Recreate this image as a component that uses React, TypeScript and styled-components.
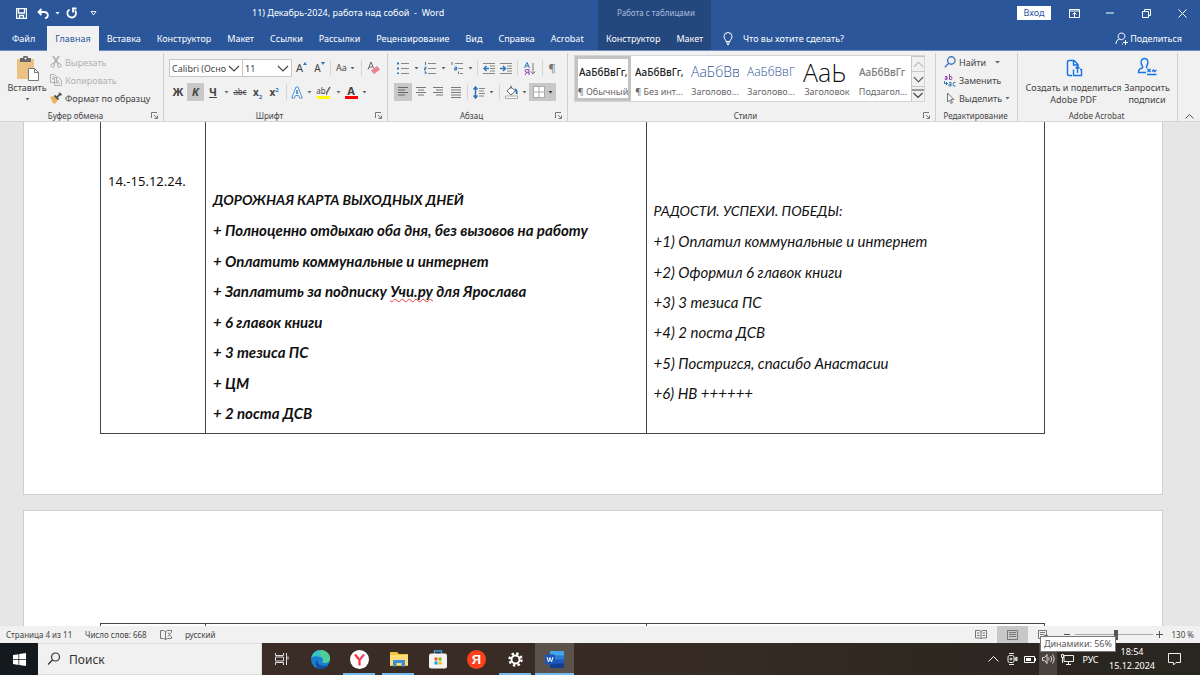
import React from "react";
import styled, { createGlobalStyle, css } from "styled-components";

const Global = createGlobalStyle`
  * { box-sizing: border-box; }
  body { margin: 0; font-family: "Noto Sans", "Open Sans", sans-serif; font-size: 9px; color: #444; }
  button, input, select { font: inherit; color: inherit; margin: 0; padding: 0; border: 0; background: none; border-radius: 0; }
  svg { display: block; flex: none; }
`;

const blue = "#2b579a";
const grey = "#666";

/* ---------- icons ---------- */
const Svg = styled.svg.attrs({ fill: "none", "aria-hidden": true })``;

type IconProps = { w?: number; h?: number; vb?: string; children: React.ReactNode; c?: string; s?: number };
const Icon = ({ w = 12, h = 12, vb, children, c = grey, s = 1 }: IconProps) => (
  <Svg width={w} height={h} viewBox={vb || `0 0 ${w} ${h}`} stroke={c} strokeWidth={s}>{children}</Svg>
);
const Arrow = ({ c = "#666" }: { c?: string }) => (
  <Icon w={5} h={3}><path d="M.5 0h4l-2 2.5z" fill={c} stroke="none" /></Icon>
);
const Chevron = ({ up, w = 12, c = "#444" }: { up?: boolean; w?: number; c?: string }) => (
  <Icon w={w} h={7} vb="0 0 12 7" c={c} s={1.2}><path d={up ? "M1 6l5-5 5 5" : "M1 1l5 5 5-5"} /></Icon>
);
const Launcher = () => (
  <Icon w={7} h={7} c="#777"><path d="M.5 6V.5H6M3 3l3 3M6.500 3.500v3h-3" /></Icon>
);

/* ---------- shell ---------- */
const Shell = styled.div`display: flex; flex-direction: column; height: 100vh; overflow: hidden; background: #e6e6e6;`;

const Header = styled.header`
  display: grid; grid-template-columns: 598px 113px 1fr; grid-template-rows: 26px 24px;
  flex: none; background: ${blue}; color: #fff; border-bottom: 1px solid #6f8dbf;
`;
const QuickBar = styled.div`display: flex; align-items: center; padding-left: 11px;`;
const HeadButton = styled.button<{ $w: number }>`
  width: ${p => p.$w}px; height: 24px; display: flex; align-items: center; justify-content: center;
`;
const DocTitle = styled.h1`margin: 0 0 0 149px; font-size: 9px; font-weight: 400; white-space: pre; line-height: 24px;`;
const ContextTitle = styled.div`
  background: #24477e; color: #a9bcdc; font-size: 8px; line-height: 25px; padding-left: 19px; white-space: nowrap;
`;
const WindowBar = styled.div`display: flex; align-items: center; justify-content: flex-end;`;
const SignIn = styled.button`background: #fff; color: ${blue}; width: 34px; height: 14px; line-height: 14px; margin-right: 5px;`;
const Tabs = styled.nav<{ $context?: boolean }>`
  display: flex; ${p => p.$context && css`background: #24477e;`}
`;
const Tab = styled.button<{ $active?: boolean; $first?: boolean }>`
  padding: 0 ${p => (p.$first ? 12 : 8)}px; white-space: nowrap; line-height: 24px; margin-bottom: -1px;
  ${p => p.$active && css`background: #f1f1f1; color: ${blue};`}
`;
const TellBar = styled.div`display: flex; align-items: center; padding: 0 18px 0 12px;`;
const TellMe = styled.button`display: flex; align-items: center; gap: 10px;`;
const Share = styled.button`display: flex; align-items: center; gap: 2px; margin-left: auto;`;

/* ---------- ribbon ---------- */
const Ribbon = styled.div`display: flex; flex: none; height: 71px; padding: 2px 0 0; background: #f1f1f1; border-bottom: 1px solid #d5d5d5;`;
const Group = styled.section<{ $w?: number }>`
  display: flex; flex-direction: column; position: relative;
  ${p => (p.$w ? css`flex: none; width: ${p.$w}px;` : css`flex: 1; min-width: 0;`)}
  border-right: 1px solid #cfcfcf;
`;
const GroupBody = styled.div<{ $pad?: number }>`flex: 1; display: flex; padding-left: ${p => p.$pad ?? 0}px;`;
const GroupFoot = styled.footer`display: flex; align-items: center; height: 11px; padding-right: 2px;`;
const GroupName = styled.span`flex: 1; text-align: center; font-size: 8px; line-height: 11px; white-space: nowrap;`;
const LaunchButton = styled.button`width: 10px; height: 9px;`;

const BigButton = styled.button<{ $w: number }>`
  width: ${p => p.$w}px; display: flex; flex-direction: column; align-items: center; line-height: 12px; padding-top: 3px; white-space: nowrap;
`;
const BigArt = styled.span`height: 26px; display: block;`;
const Stack = styled.div`display: flex; flex-direction: column;`;
const SmallButton = styled.button`
  display: flex; align-items: center; gap: 3px; height: 18px; white-space: nowrap;
  &:disabled { color: #b1b1b1; }
`;
const ToolRows = styled.div`display: flex; flex-direction: column; gap: 6px; padding-top: 6px;`;
const ToolRow = styled.div`display: flex; align-items: center; height: 18px;`;
const Tool = styled.button<{ $w: number; $on?: boolean; $tight?: boolean }>`
  width: ${p => p.$w}px; height: 18px; display: flex; align-items: center; justify-content: center; gap: ${p => (p.$tight ? 0 : 3)}px;
  white-space: nowrap; background: ${p => (p.$on ? "#c8c8c8" : "none")};
`;
const Glyph = styled.span<{ $size?: number; $bold?: boolean; $italic?: boolean; $line?: string; $color?: string }>`
  font-size: ${p => p.$size ?? 11}px; line-height: 14px; color: ${p => p.$color ?? "#444"};
  font-weight: ${p => (p.$bold ? 700 : 400)}; font-style: ${p => (p.$italic ? "italic" : "normal")};
  text-decoration: ${p => p.$line ?? "none"};
  sub, sup { font-size: 6px; line-height: 0; color: #2e75b6; }
`;
const Marked = styled.span<{ $bar: string }>`
  display: flex; align-items: center; justify-content: center; width: 13px; height: 14px; border-bottom: 3px solid ${p => p.$bar};
`;
const Rule = styled.span<{ $w: number }>`
  width: ${p => p.$w}px; height: 16px; display: flex; justify-content: center;
  &::before { content: ""; width: 1px; background: #d5d5d5; }
`;
const Combo = styled.label<{ $w: number }>`
  position: relative; width: ${p => p.$w}px; height: 18px; background: #fff; border: 1px solid #c6c6c6; display: flex; align-items: center;
  & + & { border-left: 0; }
  select { appearance: none; width: calc(100% - 16px); height: 16px; padding-left: 2px; overflow: hidden; text-overflow: clip; }
  svg { position: absolute; right: 2px; top: 5px; pointer-events: none; }
`;

const Gallery = styled.div`
  flex: 1; display: flex; margin: 2px 10px 0 6px; height: 47px; background: #fff; border: 1px solid #d5d5d5; overflow: hidden;
`;
const StyleCard = styled.button<{ $on?: boolean }>`
  flex: 1; min-width: 0; height: 45px; display: flex; flex-direction: column; align-items: center; justify-content: space-between;
  border: 3px solid ${p => (p.$on ? "#c3c3c3" : "transparent")}; overflow: hidden; color: #666; white-space: nowrap;
`;
const Preview = styled.span<{ $size: number; $color: string; $light?: boolean }>`
  width: 48px; overflow: hidden; text-align: left; font-size: ${p => p.$size}px; line-height: 26px; height: 26px; color: ${p => p.$color};
  font-family: ${p => (p.$light ? `"Open Sans"` : `"Noto Sans"`)}, sans-serif; font-weight: ${p => (p.$light ? 300 : 500)};
`;
const CardName = styled.span`line-height: 13px;`;
const Scroller = styled.div`width: 13px; display: flex; flex-direction: column; border-left: 1px solid #c6c6c6;`;
const ScrollButton = styled.button`
  flex: 1; display: flex; align-items: center; justify-content: center; background: #f1f1f1; border-top: 1px solid #c6c6c6;
`;
const CollapseBox = styled.div`width: 22px; display: flex; align-items: flex-end; justify-content: center; padding-bottom: 2px;`;

/* ---------- document ---------- */
const Canvas = styled.main`flex: 1; min-height: 0; overflow: hidden; display: flex; flex-direction: column; gap: 15px; padding: 0 37px 0 23px;`;
const Page = styled.article<{ $rest?: boolean }>`
  background: #fff; border: 1px solid #cfcfcf; padding: ${p => (p.$rest ? "112px" : "0")} 117px ${p => (p.$rest ? "0" : "60px")} 76px;
  ${p => (p.$rest ? css`flex: 1; min-height: 0; overflow: hidden; border-bottom: 0;` : css`flex: none; border-top: 0;`)}
`;
const Table = styled.table`width: 100%; border-collapse: collapse; table-layout: fixed; color: #111;`;
const Cell = styled.td<{ $top?: number }>`
  border: 1px solid #444; border-top-width: ${p => (p.$top ? 0 : 1)}px; vertical-align: top; padding: ${p => p.$top ?? 0}px 7px 0; height: 20px;
`;
const DateText = styled.time`display: block; font-family: "Noto Sans", sans-serif; line-height: 20px; white-space: nowrap; font-size: 13px;`;
const Lines = styled.ul<{ $h: number; $bold?: boolean }>`
  list-style: none; margin: 0 0 10px; padding: 0; height: ${p => p.$h}px; display: flex; flex-direction: column; justify-content: space-between;
  font-family: Lato, "Noto Sans", sans-serif; font-size: 15px; line-height: 20px; font-style: italic; font-weight: ${p => (p.$bold ? 700 : 400)}; white-space: nowrap;
`;
const Caption = styled.li`font-size: 14px;`;
const Misspelt = styled.span`text-decoration: underline wavy #e33 1px; text-underline-offset: 1px; text-decoration-skip-ink: none;`;

/* ---------- status bar ---------- */
const StatusBar = styled.footer`
  flex: none; height: 17px; display: flex; align-items: center; background: #f1f1f1; font-size: 8px; padding: 0 6px; white-space: nowrap;
`;
const StatusItem = styled.button<{ $w: number }>`width: ${p => p.$w}px; height: 17px; text-align: left; display: flex; align-items: center;`;
const ViewButton = styled.button<{ $on?: boolean }>`
  width: 31px; height: 17px; display: flex; align-items: center; justify-content: center; background: ${p => (p.$on ? "#c8c8c8" : "none")};
`;
const StatusRight = styled.div`margin-left: auto; display: flex; align-items: center;`;
const Zoom = styled.input`
  appearance: none; width: 78px; height: 12px; margin: 0 3px;
  background: linear-gradient(#aaa, #aaa) center / 100% 1px no-repeat;
  &::-webkit-slider-thumb { appearance: none; width: 4px; height: 10px; background: #555; }
`;
const ZoomValue = styled.output`margin-left: 9px;`;

/* ---------- taskbar ---------- */
const TaskBar = styled.footer`
  flex: none; height: 32px; display: flex; align-items: stretch; color: #fff;
  background: linear-gradient(90deg, #14191d 0, #14191d 38px, #3b2d26 262px, #362a24 60%, #2b2720 85%, #29251f);
`;
const Start = styled.button`width: 38px; display: flex; align-items: center; justify-content: center;`;
const Search = styled.label`
  width: 224px; display: flex; align-items: center; gap: 8px; padding-left: 9px; background: #f1f1f1; border: 1px solid #dedede; border-left: 0; color: #333;
  input { width: 150px; font-size: 12px; outline: 0; }
  input::placeholder { color: #333; opacity: 1; }
`;
const Apps = styled.div`display: flex;`;
const AppButton = styled.button<{ $open?: boolean; $on?: boolean }>`
  width: 39px; display: flex; align-items: center; justify-content: center; position: relative;
  ${p => p.$on && css`background: #5c524c;`}
  ${p => (p.$open || p.$on) && css`&::after { content: ""; position: absolute; bottom: 0; left: ${p.$on ? 0 : 3}px; right: ${p.$on ? 0 : 4}px; height: 2px; background: #76b9ed; }`}
`;
const Tray = styled.div`margin-left: auto; display: flex; align-items: stretch; padding-right: 11px;`;
const TrayButton = styled.button<{ $w: number; $on?: boolean }>`
  width: ${p => p.$w}px; display: flex; align-items: center; justify-content: center; position: relative; font-size: 9px;
  background: ${p => (p.$on ? "#49423d" : "none")};
`;
const Clock = styled.time`width: 56px; text-align: center; font-size: 9px; line-height: 14px; padding-top: 2px; white-space: nowrap;`;
const Tip = styled.span`
  position: absolute; right: -59px; top: -7px; z-index: 2; height: 16px; padding: 0 3px; line-height: 14px; font-size: 9px;
  background: #fff; color: #575757; border: 1px solid #777; white-space: nowrap;
`;

const tabs = ["Файл", "Главная", "Вставка", "Конструктор", "Макет", "Ссылки", "Рассылки", "Рецензирование", "Вид", "Справка", "Acrobat"];
const styleCards = [
  { text: "АаБбВвГг,", name: "¶ Обычный", size: 10, color: "#222" },
  { text: "АаБбВвГг,", name: "¶ Без инт…", size: 10, color: "#222" },
  { text: "АаБбВв", name: "Заголово…", size: 14, color: "#2f5496", light: true },
  { text: "АаБбВвГ", name: "Заголово…", size: 12, color: "#2f5496", light: true },
  { text: "АаЬ", name: "Заголовок", size: 25, color: "#111", light: true },
  { text: "АаБбВвГг", name: "Подзагол…", size: 10, color: "#7a7a7a" },
];
const plans = ["+ Полноценно отдыхаю оба дня, без вызовов на работу", "+ Оплатить коммунальные и интернет", "", "+ 6 главок книги", "+ 3 тезиса ПС", "+ ЦМ", "+ 2 поста ДСВ"];
const wins = ["+1) Оплатил коммунальные и интернет", "+2) Оформил 6 главок книги", "+3) 3 тезиса ПС", "+4) 2 поста ДСВ", "+5) Постригся, спасибо Анастасии", "+6) НВ ++++++"];

const Foot = ({ name, launch = true }: { name: string; launch?: boolean }) => (
  <GroupFoot><GroupName>{name}</GroupName>{launch && <LaunchButton aria-label={`${name}: параметры`}><Launcher /></LaunchButton>}</GroupFoot>
);
const Drop = ({ w = 8 }: { w?: number }) => <Tool $w={w} aria-label="Варианты"><Arrow /></Tool>;
const DateCol = styled.col`width: 105px;`;
const PlanCol = styled.col`width: 46.67%;`;
const Cols = () => <colgroup><DateCol /><PlanCol /><col /></colgroup>;

const ClipboardGroup = () => (
  <Group $w={164}>
    <GroupBody $pad={4}>
      <BigButton $w={46}>
        <BigArt>
          <Icon w={24} h={25}>
            <path d="M2 3h17v20H2z" fill="#eac282" stroke="none" />
            <path d="M5 2h3a2.500 2.500 0 015 0h3v4H5z" fill="#666" stroke="none" /><circle cx="10.500" cy="2.500" r="1" fill="#fff" stroke="none" />
            <path d="M13.500 12.500h6l4 4v8h-10z" fill="#fff" stroke="#777" /><path d="M19.500 12.500v4h4" stroke="#777" />
          </Icon>
        </BigArt>
        Вставить
        <Icon w={5} h={8}><path d="M.5 4h4l-2 2.500z" fill={grey} stroke="none" /></Icon>
      </BigButton>
      <Stack>
        <SmallButton disabled>
          <Icon c="#aaa"><path d="M3 0l5.500 8M9 0L3.500 8" strokeWidth="1.500" /><circle cx="2.700" cy="9.500" r="1.800" /><circle cx="9.300" cy="9.500" r="1.800" /></Icon>Вырезать
        </SmallButton>
        <SmallButton disabled>
          <Icon c="#b1b1b1"><path d="M.5.5h4l2 2v6h-6zM4.500 3.500h4l3 3v5h-7zM2 3h2M2 5h2M6 7h3M6 9h4" /></Icon>Копировать
        </SmallButton>
        <SmallButton>
          <Icon><path d="M0 5l4-1 4 4-3 4-2-1z" fill="#eab45f" stroke="none" /><path d="M4.500 3.500l4 4M6.500 5.500L11 1.500M9 1l2.500 2" stroke="#555" strokeWidth="1.800" /></Icon>Формат по образцу
        </SmallButton>
      </Stack>
    </GroupBody>
    <Foot name="Буфер обмена" />
  </Group>
);

const FontGroup = () => (
  <Group $w={224}>
    <GroupBody $pad={5}>
      <ToolRows>
        <ToolRow>
          <Combo $w={74}><select aria-label="Шрифт"><option>Calibri (Основной текст)</option></select><Chevron /></Combo>
          <Combo $w={49}><select aria-label="Размер шрифта"><option>11</option></select><Chevron /></Combo>
          <Tool $w={19} $tight><Glyph $size={11}>A</Glyph><Icon w={4} h={12}><path d="M0 3l2-3 2 3z" fill="#2e75b6" stroke="none" /></Icon></Tool>
          <Tool $w={17} $tight><Glyph $size={10}>A</Glyph><Icon w={4} h={12}><path d="M0 0l2 3 2-3z" fill="#2e75b6" stroke="none" /></Icon></Tool>
          <Rule $w={4} />
          <Tool $w={27}><Glyph $size={9}>Aa</Glyph><Arrow /></Tool>
          <Rule $w={4} />
          <Tool $w={20} aria-label="Удалить форматирование">
            <Icon w={13} h={14}><path d="M1 8.500L4 1l2.500 6M2 6h3.500" /><path d="M4 9.500L10 5l3 3.500-6 4.500z" fill="#e8838f" stroke="none" /></Icon>
          </Tool>
        </ToolRow>
        <ToolRow>
          <Tool $w={18}><Glyph $bold>Ж</Glyph></Tool>
          <Tool $w={17} $on><Glyph $bold $italic>К</Glyph></Tool>
          <Tool $w={18}><Glyph $bold $line="underline">Ч</Glyph></Tool>
          <Drop />
          <Tool $w={20}><Glyph $size={8} $line="line-through">abc</Glyph></Tool>
          <Tool $w={15}><Glyph $size={10} $bold>x<sub>2</sub></Glyph></Tool>
          <Tool $w={18}><Glyph $size={10} $bold>x<sup>2</sup></Glyph></Tool>
          <Rule $w={6} />
          <Tool $w={16} aria-label="Текстовые эффекты">
            <Icon w={12} h={13} c="#4a8fd0"><path d="M.8 12L5 1h2l4.200 11H8.500l-.8-2.500H4.300L3.500 12zM5 7.500h2L6 4z" fill="#fff" /></Icon>
          </Tool>
          <Drop />
          <Tool $w={21}><Marked $bar="#ff0"><Glyph $size={8}>ab</Glyph><Icon w={5} h={10}><path d="M0 9l1-3 3-5" strokeWidth="1.500" /></Icon></Marked></Tool>
          <Drop />
          <Tool $w={18}><Marked $bar="#f00"><Glyph $bold $size={11}>A</Glyph></Marked></Tool>
          <Drop />
        </ToolRow>
      </ToolRows>
    </GroupBody>
    <Foot name="Шрифт" />
  </Group>
);

const LinesIcon = ({ d, c = "#777" }: { d: string; c?: string }) => <Icon c={c}><path d={d} /></Icon>;

const ParagraphGroup = () => (
  <Group $w={180}>
    <GroupBody $pad={6}>
      <ToolRows>
        <ToolRow>
          <Tool $w={18} aria-label="Маркеры"><Icon><path d="M4 1.500h8M4 6.500h8M4 11.500h8" stroke="#888" /><path d="M0 1.500h2M0 6.500h2M0 11.500h2" stroke="#2e75b6" strokeWidth="2" /></Icon></Tool>
          <Drop w={9} />
          <Tool $w={18} aria-label="Нумерация"><Icon><path d="M4 1.500h8M4 6.500h8M4 11.500h8" stroke="#888" /><path d="M1.500 0v3M.5 5h1.500v1.500H.5V8H2M.5 10h1.500v2H.5" stroke="#2e75b6" /></Icon></Tool>
          <Drop w={9} />
          <Tool $w={18} aria-label="Многоуровневый список"><Icon><path d="M4 1.500h8M7 6.500h5M9 11.500h3" stroke="#888" /><path d="M1 0v3M3.500 5h2v3h-2V6.500h2M7.500 9.500v3" stroke="#2e75b6" /></Icon></Tool>
          <Drop />
          <Rule $w={6} />
          <Tool $w={17} aria-label="Уменьшить отступ"><Icon><path d="M0 1.500h12M7 4h5M7 6.500h5M7 9h5M0 11.500h12" stroke="#888" /><path d="M6 6.500H1M3.500 4L1 6.500 3.500 9" stroke="#2e75b6" strokeWidth="1.500" /></Icon></Tool>
          <Tool $w={17} aria-label="Увеличить отступ"><Icon><path d="M0 1.500h12M7 4h5M7 6.500h5M7 9h5M0 11.500h12" stroke="#888" /><path d="M0 6.500h5M3 4l2.500 2.500L3 9" stroke="#2e75b6" strokeWidth="1.500" /></Icon></Tool>
          <Rule $w={6} />
          <Tool $w={20} aria-label="Сортировка"><Icon w={12} h={13}><path d="M.5 6L3 .5 5.500 6M1.500 4h3" stroke="#2e75b6" /><path d="M5 13V7.500H2.500a1.300 1.300 0 000 2.700H5M3 10L1 13" stroke="#8a3fa8" /><path d="M9 1v11M6.800 9.500L9 12l2.200-2.500" stroke="#777" /></Icon></Tool>
          <Rule $w={4} />
          <Tool $w={16}><Glyph $size={11} $color="#777">¶</Glyph></Tool>
        </ToolRow>
        <ToolRow>
          <Tool $w={18} $on aria-label="По левому краю"><LinesIcon c="#666" d="M1 1.500h10M1 4h7M1 6.500h10M1 9h7" /></Tool>
          <Tool $w={17} aria-label="По центру"><LinesIcon d="M1 1.500h10M3 4h6M1 6.500h10M3 9h6" /></Tool>
          <Tool $w={18} aria-label="По правому краю"><LinesIcon d="M1 1.500h10M4 4h7M1 6.500h10M4 9h7" /></Tool>
          <Tool $w={18} aria-label="По ширине"><LinesIcon d="M1 1.500h10M1 4h10M1 6.500h10M1 9h10M1 11.500h10" /></Tool>
          <Rule $w={5} />
          <Tool $w={17} aria-label="Интервал"><Icon h={13}><path d="M6 2.500h6M6 5h5M6 7.500h6M6 10h5" stroke="#888" /><path d="M2.500 1v11M.5 3.500l2-2.500 2 2.500M.5 9.500l2 2.500 2-2.500" stroke="#2e75b6" strokeWidth="1.500" /></Icon></Tool>
          <Drop />
          <Rule $w={8} />
          <Tool $w={16} aria-label="Заливка"><Icon w={13} h={14}><path d="M2 6l4-4 4.500 4L6 10zM6 4V.5" stroke="#666" fill="#fff" /><path d="M10 4c2 1 2 3 1.500 5" stroke="#2e75b6" strokeWidth="1.800" /><path d="M.5 11h12v2.500H.5z" fill="#fff" stroke="#aaa" /></Icon></Tool>
          <Drop w={10} />
          <Tool $w={27} $on aria-label="Границы"><Icon><path d="M.5.5h11v11H.5zM6 .5v11M.5 6h11" fill="#fff" stroke="#aaa" /></Icon><Arrow c="#333" /></Tool>
        </ToolRow>
      </ToolRows>
    </GroupBody>
    <Foot name="Абзац" />
  </Group>
);

const StylesGroup = () => (
  <Group>
    <GroupBody>
      <Gallery>
        {styleCards.map((s, i) => (
          <StyleCard key={i} $on={i === 0}>
            <Preview $size={s.size} $color={s.color} $light={s.light}>{s.text}</Preview>
            <CardName>{s.name}</CardName>
          </StyleCard>
        ))}
        <Scroller>
          <ScrollButton aria-label="Вверх"><Chevron up w={11} c="#b5b5b5" /></ScrollButton>
          <ScrollButton aria-label="Вниз"><Chevron w={11} /></ScrollButton>
          <ScrollButton aria-label="Ещё"><Icon w={12} h={10} c="#444" s={1.2}><path d="M0 1h12M1.500 4L6 8.500 10.500 4" /></Icon></ScrollButton>
        </Scroller>
      </Gallery>
    </GroupBody>
    <Foot name="Стили" />
  </Group>
);

const EditGroup = () => (
  <Group $w={82}>
    <GroupBody $pad={8}>
      <Stack>
        <SmallButton><Icon c="#3b78b8" s={1.4}><circle cx="7.300" cy="4.500" r="3.700" /><path d="M4.500 7.500L.8 11.200" /></Icon>Найти <Icon w={12} h={3}><path d="M6 0h5L8.500 2.500z" fill={grey} stroke="none" /></Icon></SmallButton>
        <SmallButton>
          <Icon w={12} h={13}>
            <path d="M1 2.500h2v3H1.500a.8.8 0 010-1.500H3M5.500 0v5.500h1.300a1 1 0 001-1V3.500a1 1 0 00-1-1H5.500" stroke="#8a3fa8" />
            <path d="M5 8.500h2v3.500H5.500a.8.8 0 010-1.600H7M11.500 8.500H10a.8.800 0 00-.8.8v1.900c0 .5.300.8.8.8h1.500" stroke="#2e75b6" />
            <path d="M.5 7v2.500h3M2 8l1.500 1.500L2 11" stroke="#2e75b6" />
          </Icon>Заменить
        </SmallButton>
        <SmallButton><Icon c="#777"><path d="M3.500 1v9l2-2 1.500 3.500 1.500-.7L7 7.500h3z" /></Icon>Выделить<Arrow /></SmallButton>
      </Stack>
    </GroupBody>
    <Foot name="Редактирование" launch={false} />
  </Group>
);

const AcrobatGroup = () => (
  <Group $w={160}>
    <GroupBody $pad={7}>
      <BigButton $w={97}>
        <BigArt><Icon w={18} h={22} c="#1473e6" s={1.4}><path d="M7 19.500H4a1.500 1.500 0 01-1.500-1.500V6A1.500 1.500 0 014 4.500h5l4 4v2M8.500 5v4h4M8.500 13.500v6h8v-6h-1.500M12.500 17v-6M10.500 12.500l2-2 2 2" /></Icon></BigArt>
        <span>Создать и поделиться</span><span>Adobe PDF</span>
      </BigButton>
      <BigButton $w={50}>
        <BigArt><Icon w={20} h={22} c="#1473e6" s={1.4}><path d="M9 16.500H1.500c0-3 1.500-4 3.500-4.500 1-.3 1-1.200.3-2C3 7 4 2.500 7.500 2.500S12 7 9.700 10c-.6.8-.6 1.700.8 2M10 18.500h9.500M10.500 13l3 3M13.500 13l-3 3M15 15.500l1.500-1.500 1 1.500 2-1.500" /></Icon></BigArt>
        <span>Запросить</span><span>подписи</span>
      </BigButton>
    </GroupBody>
    <Foot name="Adobe Acrobat" launch={false} />
  </Group>
);

const App: React.FC = () => (
  <Shell>
    <Global />
    <Header>
      <QuickBar>
        <HeadButton $w={21} aria-label="Сохранить"><Icon w={11} h={11} c="#fff"><path d="M.5.5h10v10H.5zM2.500 1v4h6V1M3.500 10.500v-3h4v3" strokeWidth="1.300" /></Icon></HeadButton>
        <HeadButton $w={22} aria-label="Отменить"><Icon w={12} h={11} c="#fff" s={1.8}><path d="M4.500 1L1.500 4l3 3M1.500 4H7c5 0 5 6 1 6" /></Icon></HeadButton>
        <HeadButton $w={7} aria-label="Список отмены"><Icon w={5} h={3}><path d="M.5 0h4l-2 2.500z" fill="#fff" stroke="none" /></Icon></HeadButton>
        <HeadButton $w={22} aria-label="Повторить"><Icon w={12} h={12} c="#fff" s={1.8}><path d="M3.500 2.500A4.300 4.300 0 109 3.500M6 1.500h4.500M7 1.500v4" /></Icon></HeadButton>
        <HeadButton $w={20} aria-label="Настройка панели"><Icon w={7} h={7} c="#fff"><path d="M1 1.500h5L3.500 5z" strokeWidth=".9" /></Icon></HeadButton>
        <DocTitle>{"11) Декабрь-2024, работа над собой  -  Word"}</DocTitle>
      </QuickBar>
      <ContextTitle>Работа с таблицами</ContextTitle>
      <WindowBar>
        <SignIn>Вход</SignIn>
        <HeadButton $w={36} aria-label="Параметры ленты"><Icon w={11} h={9} c="#fff"><path d="M.5.5h10v8H.5zM.5 2h10M5.500 8V4M3.500 5.500l2-2 2 2" /></Icon></HeadButton>
        <HeadButton $w={36} aria-label="Свернуть"><Icon w={8} h={2} c="#fff"><path d="M0 1h8" /></Icon></HeadButton>
        <HeadButton $w={36} aria-label="Восстановить"><Icon w={9} h={9} c="#fff"><path d="M.5 2.500h6v6h-6zM2.500 2V.5h6v6H7" /></Icon></HeadButton>
        <HeadButton $w={36} aria-label="Закрыть"><Icon w={9} h={9} c="#fff"><path d="M.5.500l8 8M8.500.5l-8 8" /></Icon></HeadButton>
      </WindowBar>
      <Tabs>{tabs.map((t, i) => <Tab key={t} $first={i === 0} $active={i === 1}>{t}</Tab>)}</Tabs>
      <Tabs $context><Tab>Конструктор</Tab><Tab>Макет</Tab></Tabs>
      <TellBar>
        <TellMe><Icon w={10} h={13} c="#fff"><path d="M3 9.500C3 7.500 1 7 1 4.500a4 4 0 018 0C9 7 7 7.500 7 9.500zM3 11h4M4 12.500h2" /></Icon>Что вы хотите сделать?</TellMe>
        <Share><Icon w={13} h={13} c="#fff"><path d="M1 12c0-3 1.500-4.500 3.500-5M8 12H7M6.500 1a3.300 3.300 0 012 6 3.300 3.300 0 01-4 0 3.300 3.300 0 012-6M8 10.500h5M10.500 8v5" /></Icon>Поделиться</Share>
      </TellBar>
    </Header>

    <Ribbon>
      <ClipboardGroup /><FontGroup /><ParagraphGroup /><StylesGroup /><EditGroup /><AcrobatGroup />
      <CollapseBox><button aria-label="Свернуть ленту"><Icon w={9} h={5} c="#555"><path d="M.5 4.500l4-4 4 4" /></Icon></button></CollapseBox>
    </Ribbon>

    <Canvas>
      <Page>
        <Table>
          <Cols />
          <tbody>
            <tr>
              <Cell $top={49}><DateText>14.-15.12.24.</DateText></Cell>
              <Cell $top={68}>
                <Lines $h={233} $bold>
                  <Caption>ДОРОЖНАЯ КАРТА ВЫХОДНЫХ ДНЕЙ</Caption>
                  {plans.map((p, i) => (
                    <li key={i}>{p || <>+ Заплатить за подписку <Misspelt>Учи.ру</Misspelt> для Ярослава</>}</li>
                  ))}
                </Lines>
              </Cell>
              <Cell $top={79}>
                <Lines $h={202}>
                  <Caption>РАДОСТИ. УСПЕХИ. ПОБЕДЫ:</Caption>
                  {wins.map(w => <li key={w}>{w}</li>)}
                </Lines>
              </Cell>
            </tr>
          </tbody>
        </Table>
      </Page>
      <Page $rest>
        <Table><Cols /><tbody><tr><Cell /><Cell /><Cell /></tr></tbody></Table>
      </Page>
    </Canvas>

    <StatusBar>
      <StatusItem $w={79}>Страница 4 из 11</StatusItem>
      <StatusItem $w={75}>Число слов: 668</StatusItem>
      <StatusItem $w={25} aria-label="Правописание"><Icon w={12} h={10} c="#777"><path d="M5.500 1.500v8M.5.5h3l2 1 2-1h4v2M.5.5v8h3l2 1 2-1h4v-2M8 2.500l3 4M11 2.500l-3 4" /></Icon></StatusItem>
      <StatusItem $w={40}>русский</StatusItem>
      <StatusRight>
        <ViewButton aria-label="Режим чтения"><Icon w={12} h={9} c="#777"><path d="M6 1v8M.5.500h4L6 1.500 7.500.500h4v7.500h-4L6 9 4.500 8h-4zM2 3h2.500M2 5.500h2.500M7.500 3H10M7.500 5.500H10" /></Icon></ViewButton>
        <ViewButton $on aria-label="Разметка страницы"><Icon w={11} h={10} c="#777"><path d="M.5.500h10v9H.5zM2 2.500h7M2 4.500h7M2 6.500h7" /></Icon></ViewButton>
        <ViewButton aria-label="Веб-документ"><Icon w={11} h={10} c="#777"><path d="M.5.500h8v8h-8zM2 2.500h5M2 4.500h4M2 6.500h3" /><circle cx="8" cy="7" r="2.500" fill="#777" stroke="none" /></Icon></ViewButton>
        <button aria-label="Уменьшить"><Icon w={13} h={7} c="#555"><path d="M5 3.500h6" /></Icon></button>
        <Zoom type="range" min={0} max={100} defaultValue={54} aria-label="Масштаб" />
        <button aria-label="Увеличить"><Icon w={7} h={7} c="#555"><path d="M0 3.500h7M3.500 0v7" /></Icon></button>
        <ZoomValue>130 %</ZoomValue>
      </StatusRight>
    </StatusBar>

    <TaskBar>
      <Start aria-label="Пуск"><Icon w={13} h={13}><path d="M0 2l5.500-.8v5H0zM6.200 1L13 0v6.200H6.200zM0 6.900h5.500v5L0 11zM6.200 6.900H13V13l-6.800-1z" fill="#fff" stroke="none" /></Icon></Start>
      <Search><Icon w={14} h={14} c="#333" s={1.2}><circle cx="8.500" cy="5" r="4" /><path d="M5.500 8L1 12.500" /></Icon><input placeholder="Поиск" aria-label="Поиск" /></Search>
      <Apps>
        <AppButton aria-label="Представление задач"><Icon w={14} h={12} c="#ddd"><path d="M.5 0v2.500h8V0M.5 12V9.500h8V12M.5 4h8v4h-8zM11.500 0v12M13 3.500v3" /></Icon></AppButton>
        <AppButton aria-label="Edge">
          <Icon w={19} h={19}>
            <circle cx="9.500" cy="9.500" r="9.500" fill="#1b7fd0" stroke="none" />
            <path d="M.3 8C1 3 5 0 9.500 0c5.500 0 9.500 4 9.500 8.500 0 3-2.500 4.500-5 4.500-2 0-3-.7-2.500-1.500.8-1 .5-4-2.500-4.500C5.500 6 2 6 .3 8z" fill="#3ac0c8" stroke="none" />
            <path d="M10 0c5 0 9 4 9 8.500 0 3-2.500 4.500-5 4.500-1 0-2-.5-2-1 1-3-.5-6-3-7z" fill="#5bd67a" stroke="none" opacity=".7" />
            <path d="M6 10c0 4 4 7 9 5.500 1 0 1.800-.8 2-.5-2 3.500-6 4.500-9 3.800C4.500 17.500 4 12 6 10z" fill="#0f4fa0" stroke="none" />
          </Icon>
        </AppButton>
        <AppButton $open aria-label="Яндекс Браузер"><Icon w={19} h={19}><circle cx="9.500" cy="9.500" r="9.500" fill="#fff" stroke="none" /><path d="M5 4.500l4.500 5.500v5.500" stroke="#f33" strokeWidth="2.200" /><path d="M14 4.500L9.500 10" stroke="#f0407a" strokeWidth="2.200" /></Icon></AppButton>
        <AppButton $open aria-label="Проводник"><Icon w={18} h={16}><path d="M0 1h7l2 2h9v12H0z" fill="#f3c13a" stroke="none" /><path d="M0 4h18v10H0z" fill="#fddb7a" stroke="none" /><path d="M3 15.500V9h12v6.500h-3.500V12h-5v3.500z" fill="#3a8fd8" stroke="none" /></Icon></AppButton>
        <AppButton aria-label="Microsoft Store"><Icon w={18} h={19}><path d="M5.500 4V1h7v3" stroke="#39a5dc" strokeWidth="1.300" /><rect y="3.500" width="18" height="15" rx="2" fill="#f3f3f3" stroke="none" /><path d="M5.500 7.500h3v3h-3z" fill="#f25022" stroke="none" /><path d="M9.500 7.500h3v3h-3z" fill="#7fba00" stroke="none" /><path d="M5.500 11.500h3v3h-3z" fill="#00a4ef" stroke="none" /><path d="M9.500 11.500h3v3h-3z" fill="#ffb900" stroke="none" /></Icon></AppButton>
        <AppButton aria-label="Яндекс"><Icon w={19} h={19}><circle cx="9.500" cy="9.500" r="9.500" fill="#fc3f1d" stroke="none" /><text x="9.500" y="14" textAnchor="middle" fontSize="13" fontWeight="700" fontFamily="Liberation Sans" fill="#fff" stroke="none">Я</text></Icon></AppButton>
        <AppButton $open aria-label="Параметры"><Icon w={15} h={15} c="#fff"><circle cx="7.500" cy="7.500" r="4" strokeWidth="2" /><circle cx="7.500" cy="7.500" r="6" strokeWidth="2.400" strokeDasharray="2.400 2.312" /></Icon></AppButton>
        <AppButton $on aria-label="Word"><Icon w={19} h={17}><path d="M5 0h14v5H5z" fill="#41a5ee" stroke="none" /><path d="M5 4.500h14v4.500H5z" fill="#2b7cd3" stroke="none" /><path d="M5 8.500h14v4.500H5z" fill="#185abd" stroke="none" /><path d="M5 12.500h14V17H5z" fill="#103f91" stroke="none" /><rect y="3.500" width="10" height="10" rx="1" fill="#1a56b8" stroke="none" /><path d="M2 6l1.500 5L5 6.500 6.500 11 8 6" stroke="#fff" /></Icon></AppButton>
      </Apps>
      <Tray>
        <TrayButton $w={20} aria-label="Скрытые значки"><Icon w={11} h={6} c="#fff"><path d="M.5 5.500l5-5 5 5" /></Icon></TrayButton>
        <TrayButton $w={18} aria-label="Камера"><Icon w={11} h={12} c="#eee"><rect x="1" y="2.500" width="6" height="7" rx="1.500" /><circle cx="4" cy="6" r="1" /><path d="M2 .5h5M2 11.500h5M9 4v4M7.500 6l2.500-2v4z" /></Icon></TrayButton>
        <TrayButton $w={18} aria-label="Батарея"><Icon w={12} h={7} c="#fff"><path d="M.5.500h10v6H.5zM11.500 2v3" /><path d="M2 2h5v3H2z" fill="#fff" stroke="none" /></Icon></TrayButton>
        <TrayButton $w={18} $on aria-label="Громкость">
          <Icon w={13} h={10} c="#eee"><path d="M.5 3.500h2l2.500-3v9l-2.500-3h-2zM6.500 3.500c.8 1 .8 2 0 3M8.500 2c1.500 2 1.500 4 0 6M10.500.5c2 3 2 6 0 9" strokeWidth=".9" /></Icon>
          <Tip role="tooltip">Динамики: 56%</Tip>
        </TrayButton>
        <TrayButton $w={20} aria-label="Сеть"><Icon w={13} h={11} c="#eee"><path d="M3 1.500h9.500v6H3zM5 10.500h5M7.500 8v2M.5.500h2v3h-2zM1.500 4v5" /></Icon></TrayButton>
        <TrayButton $w={27}>РУС</TrayButton>
        <Clock>18:54<br />15.12.2024</Clock>
        <TrayButton $w={29} aria-label="Уведомления"><Icon w={13} h={13} c="#eee"><path d="M.5.500h12v9H8L5.500 12v-2.500h-5z" /></Icon></TrayButton>
      </Tray>
    </TaskBar>
  </Shell>
);

export default App;
